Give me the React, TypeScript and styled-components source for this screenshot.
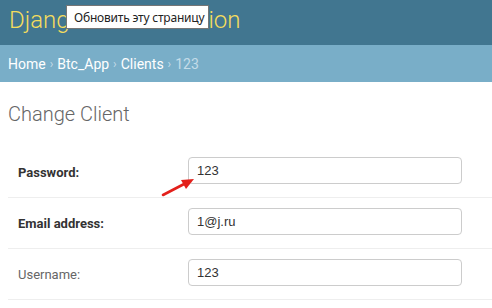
import React from "react";
import styled, { createGlobalStyle } from "styled-components";

const GlobalStyle = createGlobalStyle`
  html, body { margin: 0; padding: 0; background: #fff; }
  body { font-family: Roboto, "Liberation Sans", sans-serif; width: 492px; height: 308px; overflow: hidden; }
`;

const Page = styled.div`
  position: relative;
  width: 492px;
  height: 308px;
  overflow: hidden;
`;

const Header = styled.header`
  height: 45px;
  background: #417690;
  display: flex;
  align-items: flex-start;
  padding: 6px 9px 0;
  box-sizing: border-box;
`;

const Branding = styled.h1`
  margin: 0;
  font-size: 24px;
  font-weight: 300;
  color: #f5dd5d;
  line-height: 28px;
  white-space: nowrap;
`;

const Tooltip = styled.div`
  position: absolute;
  left: 66px;
  top: 5px;
  width: 143px;
  height: 24px;
  box-sizing: border-box;
  background: #fff;
  border: 1px solid #767676;
  font-family: "Noto Sans", "Liberation Sans", sans-serif;
  font-size: 12px;
  letter-spacing: -0.2px;
  color: #222;
  display: flex;
  align-items: center;
  padding: 0 0 0 7px;
  white-space: nowrap;
`;

const Breadcrumbs = styled.nav`
  height: 37px;
  background: #79aec8;
  display: flex;
  align-items: center;
  padding: 0 8px;
  font-size: 14px;
  color: #c4dce8;
`;

const Crumb = styled.span<{ $current?: boolean }>`
  color: ${(p) => (p.$current ? "#c4dce8" : "#fff")};
`;

const Sep = styled.span`
  color: #c4dce8;
  margin: 0 4px;
  font-size: 12px;
`;

const Content = styled.main`
  padding-left: 8px;
`;

const Title = styled.h2`
  margin: 0;
  padding: 20px 0 20px;
  font-size: 20px;
  font-weight: 300;
  color: #666;
  line-height: 25px;
`;

const Row = styled.div`
  display: flex;
  align-items: center;
  padding: 10px 0 13px 10px;
  border-bottom: 1px solid #eee;
`;

const Label = styled.label<{ $required?: boolean }>`
  width: 170px;
  font-size: 13px;
  font-weight: ${(p) => (p.$required ? 700 : 400)};
  color: ${(p) => (p.$required ? "#333" : "#666")};
  padding-top: 3px;
`;

const Input = styled.div`
  width: 274px;
  height: 27px;
  box-sizing: border-box;
  border: 1px solid #ccc;
  border-radius: 4px;
  display: flex;
  align-items: center;
  padding: 0 8px;
  font-family: "Liberation Sans", Arial, sans-serif;
  font-size: 13px;
  color: #333;
`;

const Arrow = styled.svg`
  position: absolute;
  left: 158px;
  top: 172px;
`;

const rows = [
  { label: "Password:", value: "123", required: true },
  { label: "Email address:", value: "1@j.ru", required: true },
  { label: "Username:", value: "123", required: false },
];

export default function App() {
  return (
    <>
      <GlobalStyle />
      <Page>
        <Header>
          <Branding>Django administration</Branding>
        </Header>
        <Breadcrumbs>
          <Crumb>Home</Crumb>
          <Sep>›</Sep>
          <Crumb>Btc_App</Crumb>
          <Sep>›</Sep>
          <Crumb>Clients</Crumb>
          <Sep>›</Sep>
          <Crumb $current>123</Crumb>
        </Breadcrumbs>
        <Content>
          <Title>Change Client</Title>
          {rows.map((r) => (
            <Row key={r.label}>
              <Label $required={r.required}>{r.label}</Label>
              <Input>{r.value}</Input>
            </Row>
          ))}
        </Content>
        <Tooltip>Обновить эту страницу</Tooltip>
        <Arrow width="40" height="30" viewBox="0 0 40 30">
          <line x1="5" y1="23" x2="28" y2="11" stroke="#e3201b" strokeWidth="2.6" strokeLinecap="round" />
          <polygon points="36,7 23,8 28,17" fill="#e3201b" />
        </Arrow>
      </Page>
    </>
  );
}
